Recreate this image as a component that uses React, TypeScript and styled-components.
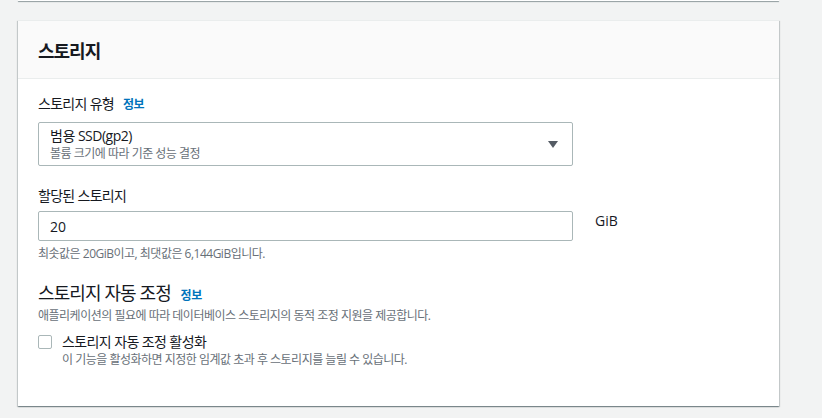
import React from "react";
import styled, { createGlobalStyle } from "styled-components";

const GlobalStyle = createGlobalStyle`
  body {
    margin: 0;
    background: #f2f3f3;
    font-family: "Open Sans", "Noto Sans CJK KR", sans-serif;
    color: #16191f;
  }
`;

const App: React.FC = () => {
  return (
    <>
      <GlobalStyle />
      <Page>
        <PrevCard />
        <Card>
          <CardHeader>
            <Heading>스토리지</Heading>
          </CardHeader>
          <CardBody>
            <Field>
              <Label>
                스토리지 유형 <InfoLink>정보</InfoLink>
              </Label>
              <Select>
                <SelectText>
                  <SelectValue>범용 SSD(gp2)</SelectValue>
                  <SelectHint>볼륨 크기에 따라 기준 성능 결정</SelectHint>
                </SelectText>
                <Caret />
              </Select>
            </Field>

            <Field $gap={4}>
              <Label>할당된 스토리지</Label>
              <InputRow>
                <Input defaultValue="20" />
                <Unit>GiB</Unit>
              </InputRow>
              <Hint>최솟값은 20GiB이고, 최댓값은 6,144GiB입니다.</Hint>
            </Field>

            <Section>
              <SubHeading>
                스토리지 자동 조정 <InfoLink>정보</InfoLink>
              </SubHeading>
              <Hint>애플리케이션의 필요에 따라 데이터베이스 스토리지의 동적 조정 지원을 제공합니다.</Hint>
              <CheckRow>
                <CheckBox type="checkbox" />
                <div>
                  <CheckLabel>스토리지 자동 조정 활성화</CheckLabel>
                  <Hint>이 기능을 활성화하면 지정한 임계값 초과 후 스토리지를 늘릴 수 있습니다.</Hint>
                </div>
              </CheckRow>
            </Section>
          </CardBody>
        </Card>
      </Page>
    </>
  );
};

export default App;

const Page = styled.div`
  width: 761px;
  margin-left: 18px;
  height: 418px;
`;

const PrevCard = styled.div`
  height: 1px;
  background: #fff;
  box-shadow: 0 1px 1px 0 rgba(0, 28, 36, 0.45);
`;

const Card = styled.section`
  margin-top: 19px;
  background: #fff;
  border-top: 1px solid #eaeded;
  box-shadow: 0 1px 1px 0 rgba(0, 28, 36, 0.3), 1px 1px 1px 0 rgba(0, 28, 36, 0.15),
    -1px 1px 1px 0 rgba(0, 28, 36, 0.15);
`;

const CardHeader = styled.div`
  height: 57px;
  display: flex;
  align-items: center;
  padding: 0 20px;
  background: #fafafa;
  border-bottom: 1px solid #eaeded;
`;

const Heading = styled.h2`
  margin: 0;
  font-size: 18px;
  font-weight: 700;
  letter-spacing: -1px;
`;

const CardBody = styled.div`
  padding: 14px 20px 37px;
`;

const Field = styled.div<{ $gap?: number }>`
  display: flex;
  flex-direction: column;
  gap: ${(p) => p.$gap ?? 6}px;
  margin-bottom: 19px;
`;

const Label = styled.div`
  font-size: 14px;
  line-height: 22px;
  letter-spacing: -0.7px;
`;

const InfoLink = styled.a`
  margin-left: 6px;
  font-size: 12px;
  font-weight: 700;
  color: #0073bb;
  letter-spacing: -0.5px;
`;

const Select = styled.div`
  width: 535px;
  height: 44px;
  box-sizing: border-box;
  border: 1px solid #aab7b8;
  border-radius: 2px;
  padding: 0 14px 0 11px;
  display: flex;
  align-items: center;
  justify-content: space-between;
`;

const SelectText = styled.div`
  display: flex;
  flex-direction: column;
`;

const SelectValue = styled.span`
  font-size: 14px;
  line-height: 20px;
  letter-spacing: -0.5px;
`;

const SelectHint = styled.span`
  font-size: 12px;
  line-height: 16px;
  color: #687078;
  letter-spacing: -0.5px;
`;

const Caret = styled.span`
  width: 0;
  height: 0;
  border-left: 5px solid transparent;
  border-right: 5px solid transparent;
  border-top: 7px solid #545b64;
`;

const InputRow = styled.div`
  display: flex;
  align-items: flex-start;
  gap: 22px;
`;

const Input = styled.input`
  width: 535px;
  height: 30px;
  box-sizing: border-box;
  border: 1px solid #aab7b8;
  border-radius: 2px;
  padding: 0 11px;
  font-family: inherit;
  font-size: 14px;
  color: #16191f;
  outline: none;
`;

const Unit = styled.span`
  font-size: 14px;
  line-height: 20px;
`;

const Hint = styled.div`
  font-size: 12px;
  line-height: 18px;
  color: #687078;
  letter-spacing: -0.5px;
`;

const Section = styled.div`
  display: flex;
  flex-direction: column;
  margin-top: 8px;
`;

const SubHeading = styled.div`
  font-size: 18px;
  line-height: 22px;
  letter-spacing: -0.9px;
`;

const CheckRow = styled.label`
  display: flex;
  align-items: flex-start;
  gap: 10px;
  margin-top: 8px;
`;

const CheckBox = styled.input`
  appearance: none;
  width: 14px;
  height: 14px;
  margin: 2px 0 0;
  border: 1px solid #aab7b8;
  border-radius: 2px;
  background: #fff;
`;

const CheckLabel = styled.div`
  font-size: 14px;
  line-height: 18px;
  letter-spacing: -0.6px;
`;
